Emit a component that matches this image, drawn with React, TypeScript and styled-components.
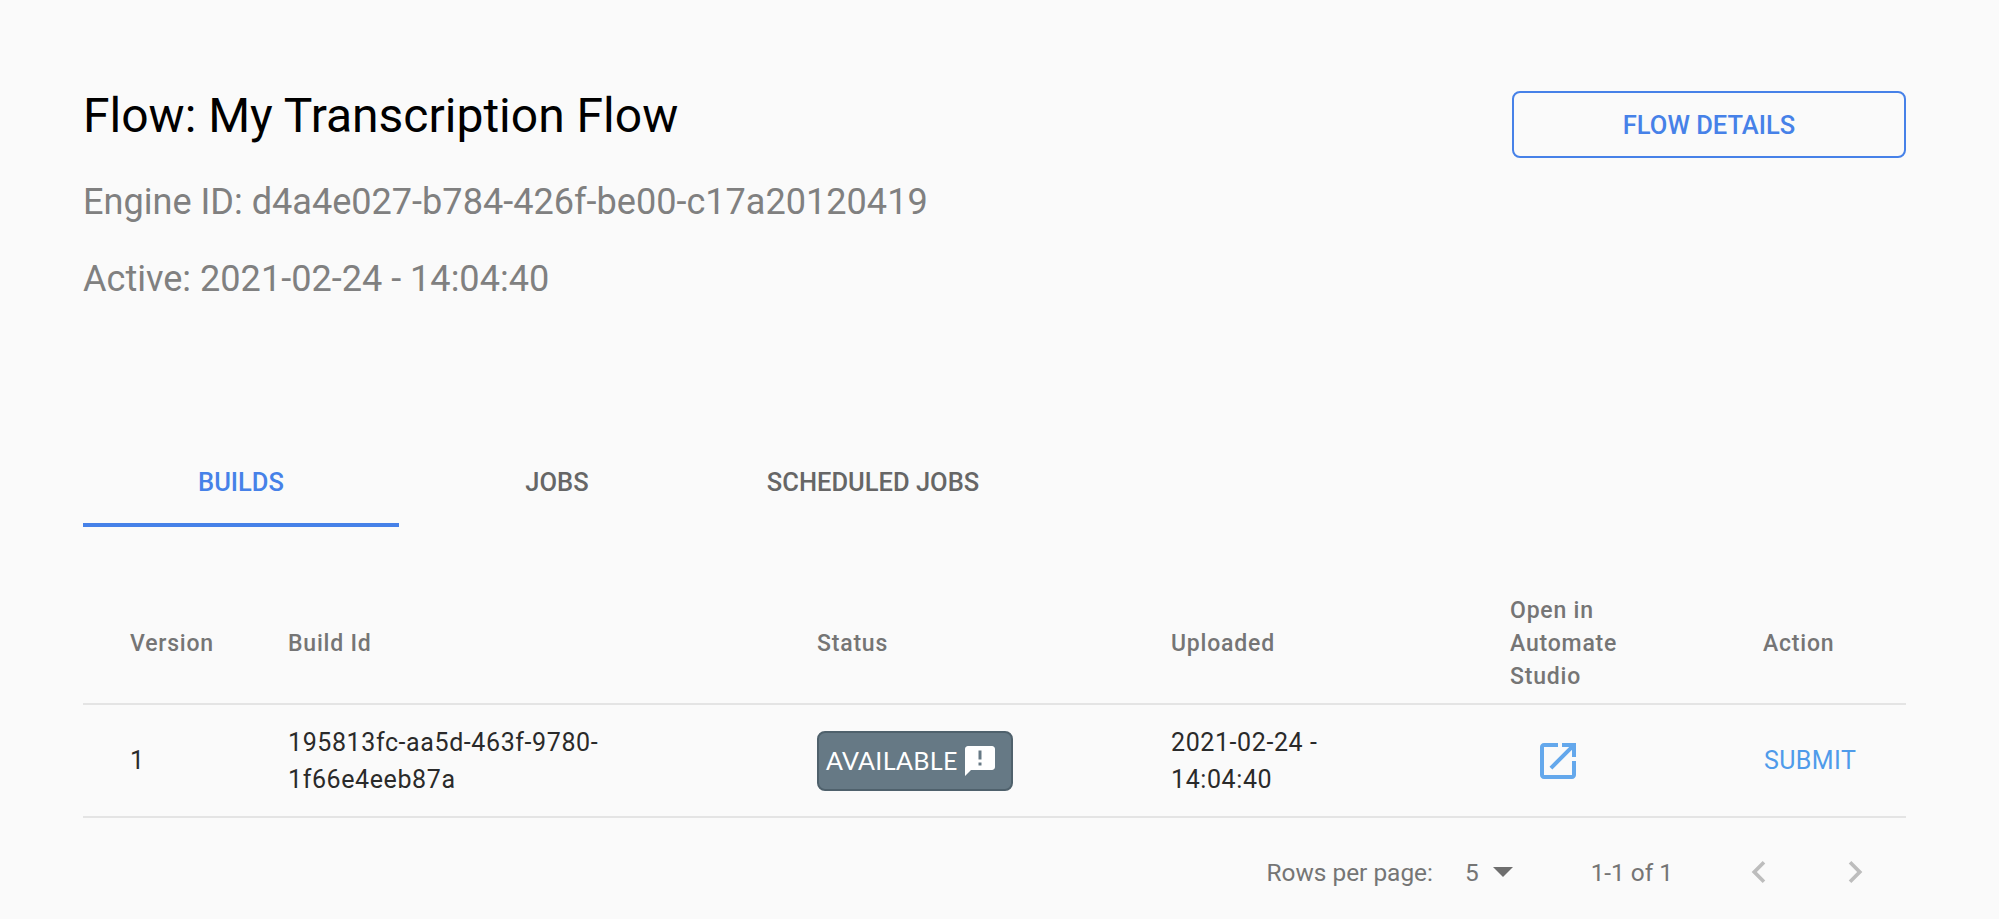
import React from "react";
import styled, { createGlobalStyle } from "styled-components";

const Global = createGlobalStyle`
  html, body { margin: 0; padding: 0; background: #fafafa; overflow: hidden; }
  body { font-family: Roboto, "Liberation Sans", sans-serif; }
`;

const Page = styled.main`
  box-sizing: border-box;
  width: 1999px;
  height: 919px;
  padding: 88px 93px 0 83px;
  background: #fafafa;
  overflow: hidden;
`;

const Header = styled.header`
  display: flex;
  justify-content: space-between;
  align-items: flex-start;
  height: 349px;
`;

const Info = styled.div`
  display: flex;
  flex-direction: column;
  padding-top: 1px;
`;

const Title = styled.h1`
  margin: 0 0 37px;
  font-size: 48px;
  line-height: 54px;
  font-weight: 400;
  color: #000;
`;

const Meta = styled.p`
  margin: 0 0 33px;
  font-size: 36.1px;
  line-height: 44px;
  font-weight: 400;
  color: #808080;
`;

const OutlineButton = styled.button`
  box-sizing: border-box;
  width: 394px;
  height: 67px;
  margin-top: 3px;
  background: transparent;
  border: 2px solid #4681e8;
  border-radius: 8px;
  color: #4681e8;
  font: 500 25.5px Roboto, sans-serif;
`;

const Tabs = styled.nav`
  display: flex;
  height: 90px;
`;

const Tab = styled.div<{ $active?: boolean }>`
  box-sizing: border-box;
  width: 316px;
  height: 90px;
  padding-top: 31px;
  text-align: center;
  font-size: 25.5px;
  line-height: 28px;
  font-weight: 500;
  color: ${(p) => (p.$active ? "#4681e8" : "#666666")};
  border-bottom: 4px solid ${(p) => (p.$active ? "#4681e8" : "transparent")};
`;

const Table = styled.section`
  margin-top: 54px;
  width: 1823px;
`;

const Row = styled.div<{ $head?: boolean }>`
  box-sizing: content-box;
  display: grid;
  grid-template-columns: 158px 529px 354px 339px 253px 190px;
  align-items: center;
  height: ${(p) => (p.$head ? "119px" : "111px")};
  padding-left: 47px;
  padding-top: ${(p) => (p.$head ? "3px" : "0")};
  border-bottom: 2px solid #e4e4e4;
  font-size: ${(p) => (p.$head ? "23px" : "25px")};
  line-height: ${(p) => (p.$head ? "33px" : "37px")};
  color: ${(p) => (p.$head ? "#757575" : "#2a2a2a")};
  font-weight: ${(p) => (p.$head ? 500 : 400)};
  letter-spacing: ${(p) => (p.$head ? "0.8px" : "0.6px")};
`;

const Wrapped = styled.span<{ $w: number }>`
  display: block;
  width: ${(p) => p.$w}px;
`;

const Badge = styled.span`
  box-sizing: border-box;
  display: inline-flex;
  align-items: center;
  justify-content: space-between;
  width: 196px;
  height: 60px;
  padding: 0 13px 0 7px;
  background: #667985;
  border: 2px solid #4f616c;
  border-radius: 8px;
  color: #fff;
  font-family: Lato, sans-serif;
  font-size: 25px;
  letter-spacing: 0.4px;
`;

const IconLink = styled.span`
  display: flex;
  padding-left: 24px;
  color: #64a8ec;
`;

const Submit = styled.span`
  color: #4f9bea;
  font-size: 25px;
  letter-spacing: 0.4px;
  padding-left: 1px;
`;

const Footer = styled.footer`
  display: flex;
  align-items: center;
  justify-content: flex-end;
  height: 108px;
  width: 1823px;
  color: #757575;
  font-size: 24.4px;
`;

const RowsLabel = styled.span`
  margin-right: 32px;
`;

const Select = styled.span`
  display: inline-flex;
  align-items: center;
  gap: 14px;
  margin-right: 78px;
`;

const Caret = styled.span`
  width: 0;
  height: 0;
  border-left: 10px solid transparent;
  border-right: 10px solid transparent;
  border-top: 10px solid #6e6e6e;
`;

const Range = styled.span`
  margin-right: 64px;
`;

const Pager = styled.span`
  display: inline-flex;
  gap: 52px;
  margin-right: 29px;
  color: #bdbdbd;
`;

const AlertBubble = () => (
  <svg width="36" height="36" viewBox="0 0 24 24" fill="#fff">
    <path d="M20 2H4c-1.1 0-2 .9-2 2v18l4-4h14c1.1 0 2-.9 2-2V4c0-1.100-.9-2-2-2zm-7 9h-2V5h2v6zm0 4h-2v-2h2v2z" />
  </svg>
);

const OpenIcon = () => (
  <svg width="48" height="48" viewBox="0 0 24 24" fill="currentColor">
    <path d="M19 19H5V5h7V3H5c-1.110 0-2 .9-2 2v14c0 1.100.89 2 2 2h14c1.100 0 2-.9 2-2v-7h-2v7zM14 3v2h3.590l-9.830 9.830 1.410 1.410L19 6.410V10h2V3h-7z" />
  </svg>
);

const Chevron = ({ dir }: { dir: "left" | "right" }) => (
  <svg width="44" height="44" viewBox="0 0 24 24" fill="currentColor">
    <path d={dir === "left" ? "M15.410 7.410 14 6l-6 6 6 6 1.410-1.410L10.830 12z" : "M10 6 8.590 7.410 13.170 12l-4.580 4.590L10 18l6-6z"} />
  </svg>
);

export default function App() {
  return (
    <Page>
      <Global />
      <Header>
        <Info>
          <Title>Flow: My Transcription Flow</Title>
          <Meta>Engine ID: d4a4e027-b784-426f-be00-c17a20120419</Meta>
          <Meta>Active: 2021-02-24 - 14:04:40</Meta>
        </Info>
        <OutlineButton>FLOW DETAILS</OutlineButton>
      </Header>
      <Tabs>
        <Tab $active>BUILDS</Tab>
        <Tab>JOBS</Tab>
        <Tab>SCHEDULED JOBS</Tab>
      </Tabs>
      <Table>
        <Row $head>
          <span>Version</span>
          <span>Build Id</span>
          <span>Status</span>
          <span>Uploaded</span>
          <Wrapped $w={130}>Open in Automate Studio</Wrapped>
          <span>Action</span>
        </Row>
        <Row>
          <span>1</span>
          <Wrapped $w={340}>195813fc-aa5d-463f-9780-1f66e4eeb87a</Wrapped>
          <span>
            <Badge>
              AVAILABLE
              <AlertBubble />
            </Badge>
          </span>
          <Wrapped $w={180}>2021-02-24 - 14:04:40</Wrapped>
          <IconLink>
            <OpenIcon />
          </IconLink>
          <Submit>SUBMIT</Submit>
        </Row>
      </Table>
      <Footer>
        <RowsLabel>Rows per page:</RowsLabel>
        <Select>
          5<Caret />
        </Select>
        <Range>1-1 of 1</Range>
        <Pager>
          <Chevron dir="left" />
          <Chevron dir="right" />
        </Pager>
      </Footer>
    </Page>
  );
}
